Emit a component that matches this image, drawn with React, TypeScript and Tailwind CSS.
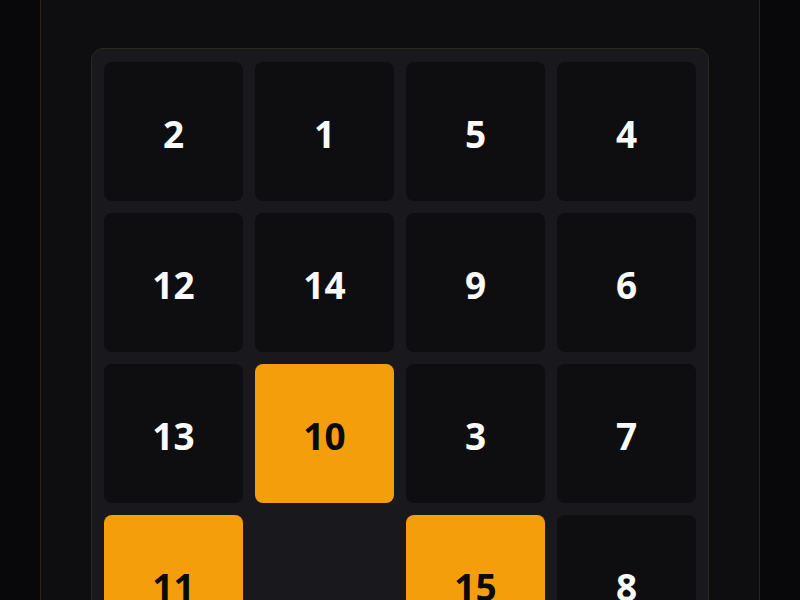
const TILES: (number | null)[] = [2, 1, 5, 4, 12, 14, 9, 6, 13, 10, 3, 7, 11, null, 15, 8];

const blank = TILES.indexOf(null);

// tiles next to the blank cell can slide, so they get the amber highlight
const canMove = (idx: number) => {
  const r = Math.floor(idx / 4);
  const c = idx % 4;
  const br = Math.floor(blank / 4);
  const bc = blank % 4;
  return Math.abs(r - br) + Math.abs(c - bc) === 1;
};

export default function App() {
  return (
    <div className="min-h-screen bg-[#08080a] px-10 font-['Noto_Sans',sans-serif]">
      <div className="min-h-[700px] border-x border-[#2a2218] bg-[#0e0e10] pt-12">
        <div className="mx-auto w-[618px] rounded-xl border border-[#2c2820] bg-[#19191d] p-3 pt-[13px]">
          <div className="grid grid-cols-4 gap-3">
            {TILES.map((v, i) =>
              v === null ? (
                <div key={i} className="aspect-square rounded-lg" />
              ) : (
                <div
                  key={i}
                  className={`flex aspect-square items-center justify-center rounded-lg pt-1 text-[37px] font-bold ${
                    canMove(i) ? 'bg-[#f59e0b] text-[#0a0a0a]' : 'bg-[#0e0e11] text-[#fafafa]'
                  }`}
                >
                  {v}
                </div>
              ),
            )}
          </div>
        </div>
      </div>
    </div>
  );
}
